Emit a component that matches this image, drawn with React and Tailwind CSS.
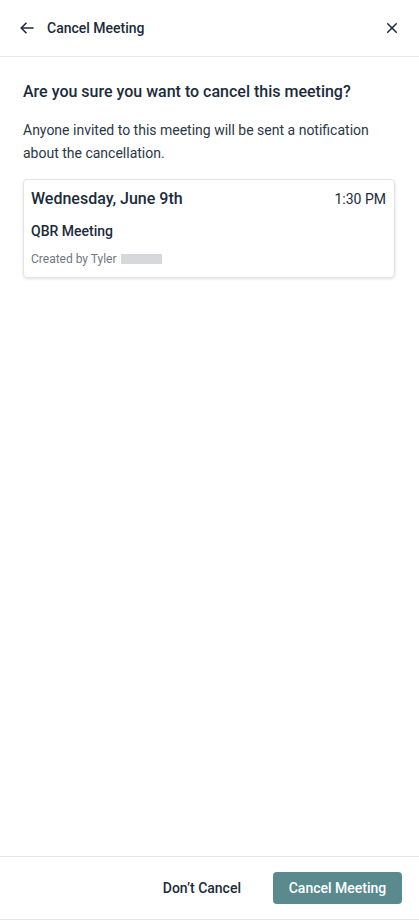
import React from 'react';

const ArrowLeft = () => (
  <svg width="16" height="16" viewBox="0 0 16 16" fill="none" stroke="#1b2b3a" strokeWidth="1.6" strokeLinecap="round" strokeLinejoin="round">
    <path d="M14 8H2.5" />
    <path d="M7 3.2L2.2 8L7 12.8" />
  </svg>
);

const CloseIcon = () => (
  <svg width="12" height="12" viewBox="0 0 12 12" fill="none" stroke="#1b2b3a" strokeWidth="1.5" strokeLinecap="round">
    <path d="M1.7 1.7L10.3 10.3" />
    <path d="M10.3 1.7L1.7 10.3" />
  </svg>
);

const App = () => {
  return (
    <div className="h-[920px] w-full flex flex-col bg-white text-[#1b2b3a]" style={{ fontFamily: 'Roboto, "Noto Sans", sans-serif' }}>
      {/* header */}
      <div className="h-[57px] flex items-center justify-between border-b border-[#e8e8e8] pl-[19px] pr-[21px]">
        <div className="flex items-center">
          <ArrowLeft />
          <span className="ml-[12px] text-[14px] font-medium">Cancel Meeting</span>
        </div>
        <CloseIcon />
      </div>

      {/* body */}
      <div className="flex-1 pl-[23px] pr-[24px] pt-[23px]">
        <h2 className="text-[16px] leading-[24px] font-medium">Are you sure you want to cancel this meeting?</h2>
        <p className="mt-[15px] text-[14px] leading-[23px] text-[#2a3744]">
          Anyone invited to this meeting will be sent a notification about the cancellation.
        </p>

        <div className="mt-[14px] border border-[#e2e4e6] rounded-[4px] shadow-[0_1px_3px_rgba(0,0,0,0.12)] px-[7px] pt-[7px] pb-[10px]">
          <div className="flex items-center justify-between">
            <span className="text-[16px] leading-[24px] font-medium">Wednesday, June 9th</span>
            <span className="text-[14px] leading-[24px] mr-[1px]">1:30 PM</span>
          </div>
          <div className="mt-[10px] text-[14px] leading-[20px] font-medium">QBR Meeting</div>
          <div className="mt-[10px] flex items-center text-[12px] leading-[16px] text-[#6e7780]">
            <span>Created by Tyler</span>
            <span className="ml-[4px] inline-block w-[41px] h-[10px] bg-[#d6d8db]"></span>
          </div>
        </div>
      </div>

      {/* footer */}
      <div className="h-[64px] border-t border-b border-[#e6e6e6] flex items-center justify-end pr-[17px]">
        <button className="px-[16px] h-[32px] text-[14px] font-medium text-[#1b2b3a]">Don&rsquo;t Cancel</button>
        <button className="ml-[16px] w-[129px] h-[32px] rounded-[4px] bg-[#588a8e] text-white text-[14px] font-medium">
          Cancel Meeting
        </button>
      </div>
    </div>
  );
};

export default App;
